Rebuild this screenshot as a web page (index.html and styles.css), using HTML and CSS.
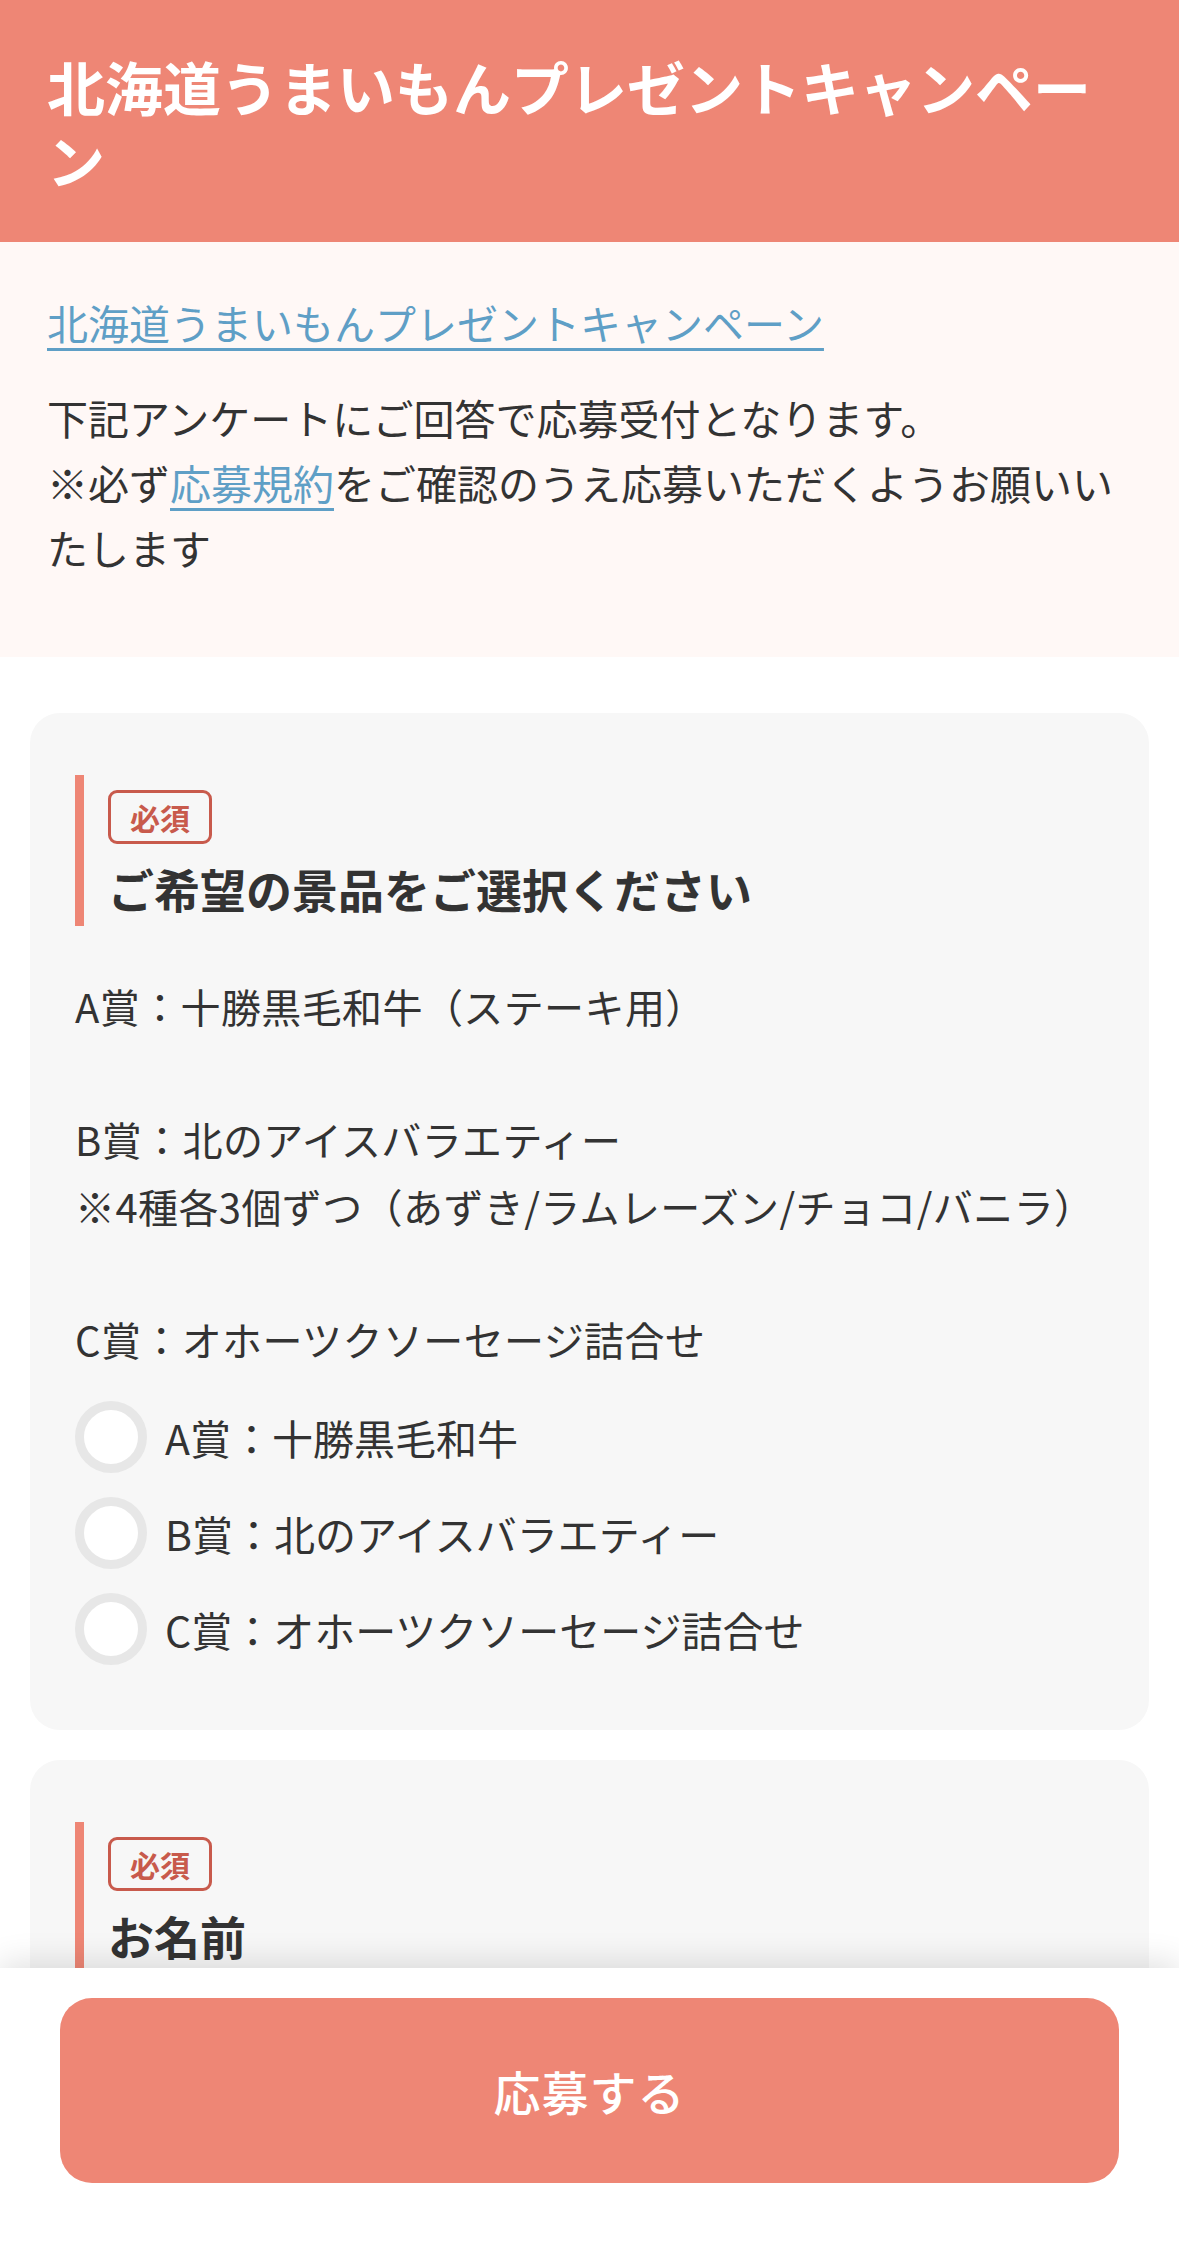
FILE: index.html
```html
<!DOCTYPE html>
<html lang="ja">
<head>
<meta charset="utf-8">
<title>北海道うまいもんプレゼントキャンペーン</title>
<link rel="stylesheet" href="styles.css">
</head>
<body>
<header class="hero">
  <h1 class="hero-title">北海道うまいもんプレゼントキャンペーン</h1>
</header>

<section class="intro">
  <a class="intro-link" href="#">北海道うまいもんプレゼントキャンペーン</a>
  <p class="intro-text">下記アンケートにご回答で応募受付となります。<br>※必ず<a class="inline-link" href="#">応募規約</a>をご確認のうえ応募いただくようお願いいたします</p>
</section>

<main class="form">
  <section class="card">
    <div class="q-head">
      <span class="badge">必須</span>
      <h2 class="q-title">ご希望の景品をご選択ください</h2>
    </div>
    <p class="q-desc">A賞：十勝黒毛和牛（ステーキ用）<br><br>B賞：北のアイスバラエティー<br>※4種各3個ずつ（あずき/ラムレーズン/チョコ/バニラ）<br><br>C賞：オホーツクソーセージ詰合せ</p>
    <div class="options">
      <label class="option"><input class="radio" type="radio" name="prize"><span class="opt-text">A賞：十勝黒毛和牛</span></label>
      <label class="option"><input class="radio" type="radio" name="prize"><span class="opt-text">B賞：北のアイスバラエティー</span></label>
      <label class="option"><input class="radio" type="radio" name="prize"><span class="opt-text">C賞：オホーツクソーセージ詰合せ</span></label>
    </div>
  </section>

  <section class="card">
    <div class="q-head">
      <span class="badge">必須</span>
      <h2 class="q-title">お名前</h2>
    </div>
    <div class="field"><input class="text-input" type="text" placeholder="山田 太郎"></div>
  </section>
</main>

<footer class="bottom-bar">
  <button class="submit" type="button">応募する</button>
</footer>
</body>
</html>
```

FILE: styles.css
```css
* {
  box-sizing: border-box;
}

html, body {
  margin: 0;
  padding: 0;
}

body {
  background: #ffffff;
  color: #333333;
  font-family: "Noto Sans CJK JP", "Noto Sans", sans-serif;
}

.hero {
  background: #ee8675;
  padding: 50px 47px 46px;
}

.hero-title {
  margin: 0;
  color: #ffffff;
  font-size: 58px;
  line-height: 73px;
  font-weight: 700;
}

.intro {
  background: #fff8f6;
  padding: 48px 47px 77px;
}

.intro-link {
  display: inline-block;
  font-size: 41px;
  line-height: 64px;
  color: #5f9fc6;
  text-decoration: underline;
  text-decoration-thickness: 3px;
  text-underline-offset: 8px;
}

.intro-text {
  margin: 31px 0 0;
  font-size: 41px;
  line-height: 65px;
  color: #333333;
}

.inline-link {
  color: #5f9fc6;
  text-decoration: underline;
  text-decoration-thickness: 3px;
  text-underline-offset: 8px;
}

.form {
  padding: 56px 30px 400px;
  display: flex;
  flex-direction: column;
  gap: 30px;
}

.card {
  background: #f7f7f7;
  border-radius: 30px;
  padding: 62px 45px 65px;
}

.q-head {
  border-left: 9px solid #ee8675;
  padding: 15px 0 2px 24px;
  display: flex;
  flex-direction: column;
  align-items: flex-start;
}

.badge {
  display: inline-block;
  border: 3px solid #c85a4c;
  border-radius: 9px;
  color: #c85a4c;
  font-size: 30px;
  line-height: 48px;
  font-weight: 700;
  padding: 0 19px;
}

.q-title {
  margin: 8px 0 0;
  font-size: 46px;
  line-height: 72px;
  font-weight: 700;
  color: #333333;
}

.q-desc {
  margin: 47px 0 0;
  font-size: 40px;
  line-height: 66.5px;
  letter-spacing: 0.4px;
  color: #333333;
}

.options {
  margin-top: 29px;
  display: flex;
  flex-direction: column;
  gap: 24px;
}

.option {
  display: flex;
  align-items: center;
  gap: 18px;
  font-size: 41px;
  line-height: 72px;
  color: #333333;
}

.radio {
  appearance: none;
  -webkit-appearance: none;
  margin: 0;
  width: 72px;
  height: 72px;
  flex: 0 0 72px;
  border: 9px solid #e7e7e7;
  border-radius: 50%;
  background: #ffffff;
}

.field {
  margin-top: 40px;
}

.text-input {
  width: 100%;
  height: 110px;
  border: 3px solid #e0e0e0;
  border-radius: 12px;
  background: #ffffff;
  font-family: inherit;
  font-size: 40px;
  padding: 0 24px;
}

.bottom-bar {
  position: fixed;
  left: 0;
  right: 0;
  bottom: 0;
  height: 279px;
  background: #ffffff;
  padding: 30px 60px 0;
  box-shadow: 0 -6px 30px rgba(0, 0, 0, 0.12);
}

.submit {
  display: block;
  width: 100%;
  height: 185px;
  border: none;
  border-radius: 32px;
  background: #ee8675;
  color: #ffffff;
  font-family: "Noto Sans CJK JP", "Noto Sans", sans-serif;
  font-size: 47px;
  font-weight: 500;
  letter-spacing: 1px;
}
```
